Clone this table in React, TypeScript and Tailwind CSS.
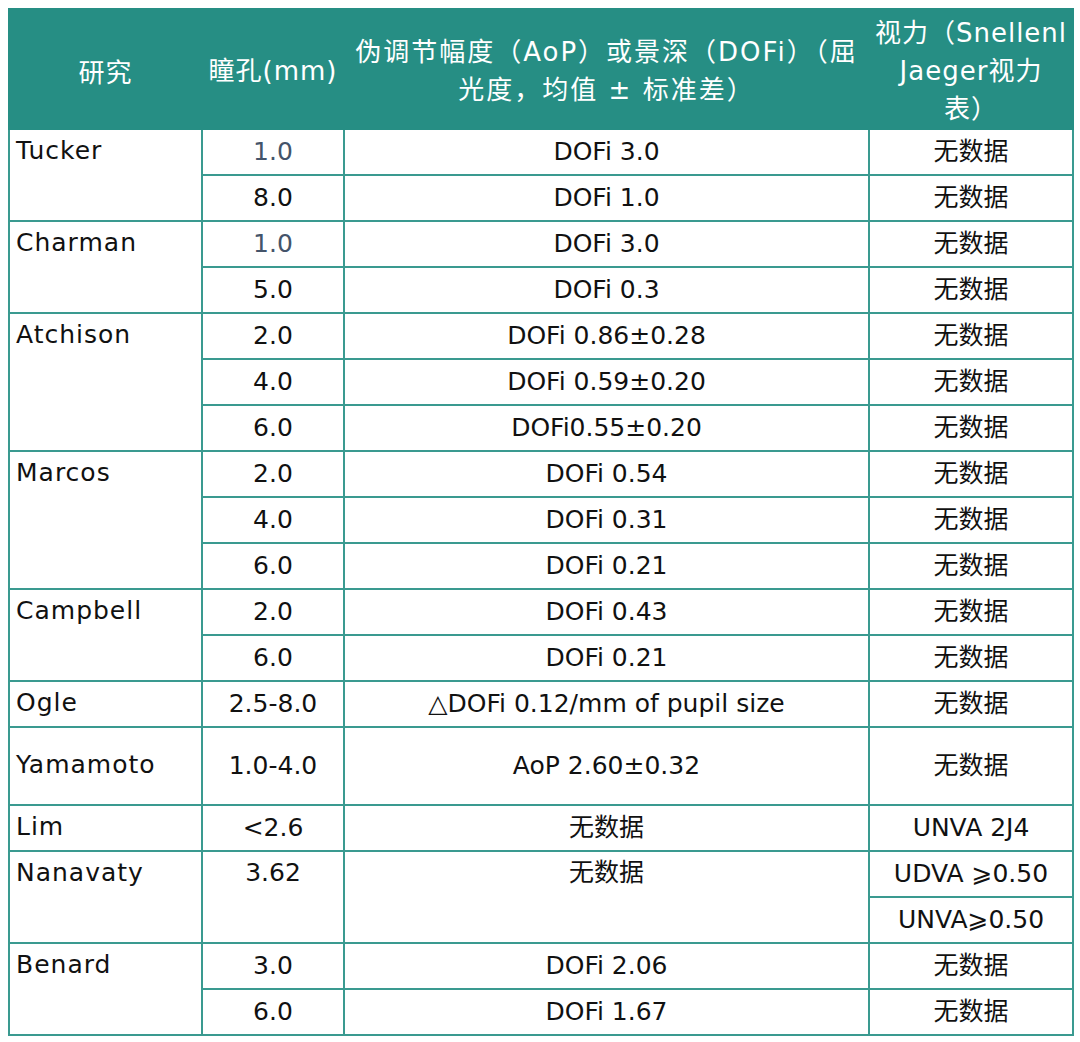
import React from "react";

type Sub = { pupil: string; blue?: boolean; dof: string; va: string };
type Group = { name: string; subs: Sub[]; tall?: boolean };

const groups: Group[] = [
  { name: "Tucker", subs: [
    { pupil: "1.0", blue: true, dof: "DOFi 3.0", va: "无数据" },
    { pupil: "8.0", dof: "DOFi 1.0", va: "无数据" },
  ]},
  { name: "Charman", subs: [
    { pupil: "1.0", blue: true, dof: "DOFi 3.0", va: "无数据" },
    { pupil: "5.0", dof: "DOFi 0.3", va: "无数据" },
  ]},
  { name: "Atchison", subs: [
    { pupil: "2.0", dof: "DOFi 0.86±0.28", va: "无数据" },
    { pupil: "4.0", dof: "DOFi 0.59±0.20", va: "无数据" },
    { pupil: "6.0", dof: "DOFi0.55±0.20", va: "无数据" },
  ]},
  { name: "Marcos", subs: [
    { pupil: "2.0", dof: "DOFi 0.54", va: "无数据" },
    { pupil: "4.0", dof: "DOFi 0.31", va: "无数据" },
    { pupil: "6.0", dof: "DOFi 0.21", va: "无数据" },
  ]},
  { name: "Campbell", subs: [
    { pupil: "2.0", dof: "DOFi 0.43", va: "无数据" },
    { pupil: "6.0", dof: "DOFi 0.21", va: "无数据" },
  ]},
  { name: "Ogle", subs: [
    { pupil: "2.5-8.0", dof: "△DOFi 0.12/mm of pupil size", va: "无数据" },
  ]},
  { name: "Yamamoto", tall: true, subs: [
    { pupil: "1.0-4.0", dof: "AoP 2.60±0.32", va: "无数据" },
  ]},
  { name: "Lim", subs: [
    { pupil: "<2.6", dof: "无数据", va: "UNVA 2J4" },
  ]},
];

const benard: Sub[] = [
  { pupil: "3.0", dof: "DOFi 2.06", va: "无数据" },
  { pupil: "6.0", dof: "DOFi 1.67", va: "无数据" },
];

const td = "border-2 border-[#3a9a90] text-center align-middle p-0";
const nameTd = "border-2 border-[#3a9a90] text-left align-top pl-[6px] pt-[3px] leading-[36px] tracking-[1px]";
const th = "border-2 border-[#268e84] font-normal text-center align-middle leading-[38px] text-[26px]";

export default function App() {
  return (
    <div className="bg-white w-[1080px] h-[1042px] pt-[8px] pl-[8px]" style={{ fontFamily: '"DejaVu Sans", "Noto Sans CJK SC", sans-serif' }}>
      <table className="table-fixed border-collapse w-[1064px] text-[25px] text-[#111111]">
        <colgroup>
          <col className="w-[193px]" />
          <col className="w-[142px]" />
          <col className="w-[525px]" />
          <col className="w-[204px]" />
        </colgroup>
        <thead>
          <tr className="h-[120px] bg-[#268e84] text-white">
            <th className={th + " tracking-[1px] pt-[8px]"}>研究</th>
            <th className={th + " tracking-[1px] pt-[4px]"}>瞳孔(mm)</th>
            <th className={th + " tracking-[2px] pt-[4px] px-0"}>
              伪调节幅度（AoP）或景深（DOFi）（屈<br />光度，均值 ± 标准差）
            </th>
            <th className={th + " tracking-[1px] pt-[4px] px-0 whitespace-nowrap"}>
              视力（Snellenl<br />Jaeger视力<br />表）
            </th>
          </tr>
        </thead>
        <tbody>
          {groups.map((g) =>
            g.subs.map((s, i) => (
              <tr key={g.name + i} className={g.tall ? "h-[78px]" : "h-[46px]"}>
                {i === 0 && (
                  <td
                    rowSpan={g.subs.length}
                    className={g.subs.length === 1 ? "border-2 border-[#3a9a90] text-left align-middle pl-[6px] pb-[2px] tracking-[1px]" : nameTd}
                  >
                    {g.name}
                  </td>
                )}
                <td className={td + (s.blue ? " text-[#44546a]" : "")}>{s.pupil}</td>
                <td className={td}>{s.dof}</td>
                <td className={td}>{s.va}</td>
              </tr>
            ))
          )}
          <tr className="h-[46px]">
            <td rowSpan={2} className={nameTd}>Nanavaty</td>
            <td rowSpan={2} className="border-2 border-[#3a9a90] text-center align-top pt-[3px] leading-[36px]">3.62</td>
            <td rowSpan={2} className="border-2 border-[#3a9a90] text-center align-top pt-[3px] leading-[36px]">无数据</td>
            <td className={td}>UDVA ⩾0.50</td>
          </tr>
          <tr className="h-[46px]">
            <td className={td}>UNVA⩾0.50</td>
          </tr>
          {benard.map((s, i) => (
            <tr key={"benard" + i} className="h-[46px]">
              {i === 0 && <td rowSpan={2} className={nameTd}>Benard</td>}
              <td className={td}>{s.pupil}</td>
              <td className={td}>{s.dof}</td>
              <td className={td}>{s.va}</td>
            </tr>
          ))}
        </tbody>
      </table>
    </div>
  );
}
